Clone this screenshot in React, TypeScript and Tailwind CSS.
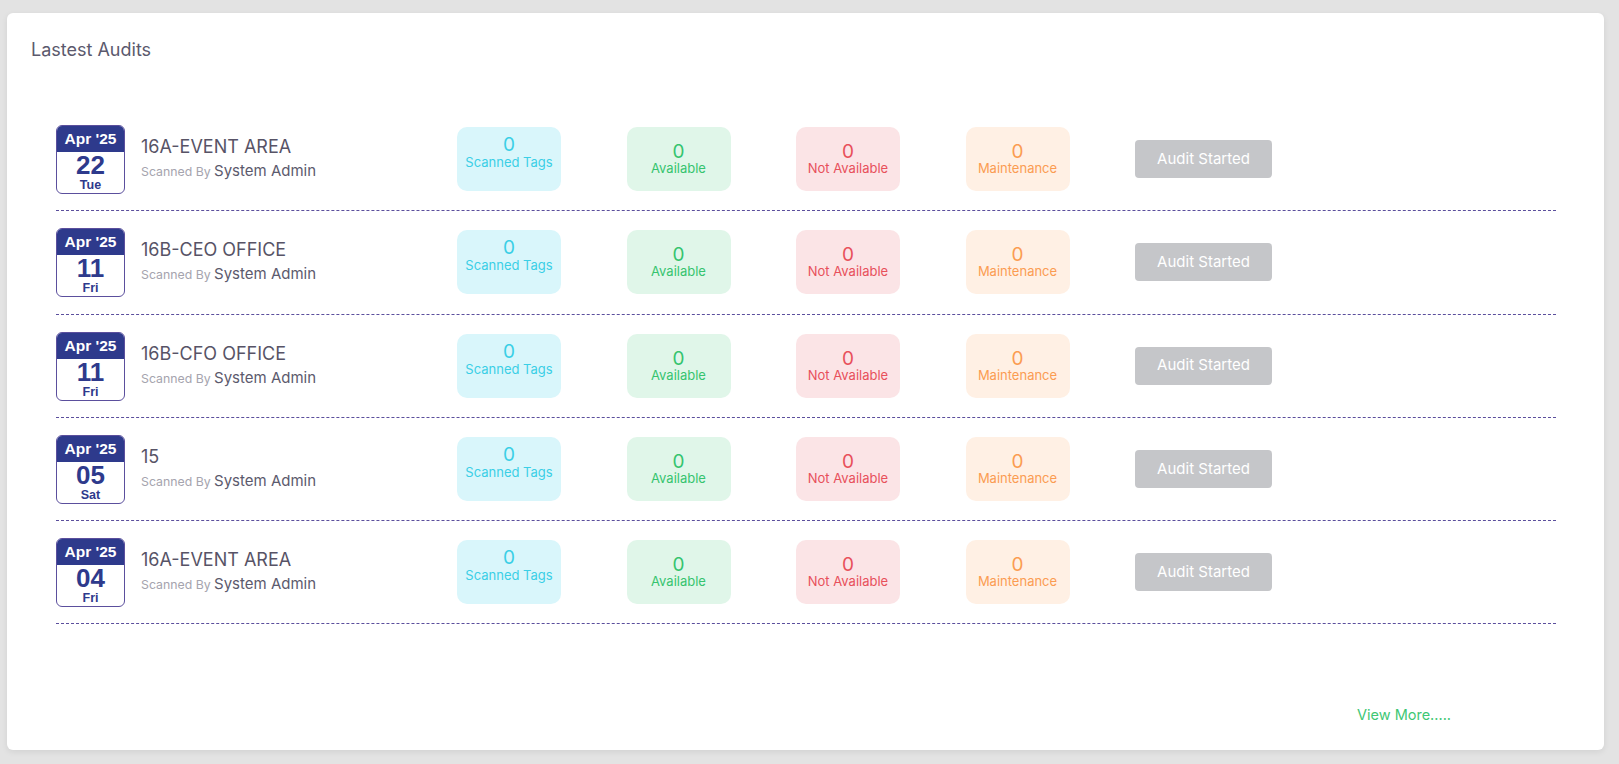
import React from "react";

type Row = { mon: string; day: string; dow: string; name: string };

const rows: Row[] = [
  { mon: "Apr '25", day: "22", dow: "Tue", name: "16A-EVENT AREA" },
  { mon: "Apr '25", day: "11", dow: "Fri", name: "16B-CEO OFFICE" },
  { mon: "Apr '25", day: "11", dow: "Fri", name: "16B-CFO OFFICE" },
  { mon: "Apr '25", day: "05", dow: "Sat", name: "15" },
  { mon: "Apr '25", day: "04", dow: "Fri", name: "16A-EVENT AREA" },
];

function DateBox({ r }: { r: Row }) {
  return (
    <div className="w-[69px] h-[69px] shrink-0 rounded-[6px] border border-[#5b4f9d] overflow-hidden flex flex-col bg-white [font-family:'Liberation_Sans',Arial,sans-serif]">
      <div className="h-[26px] bg-[#2e3a8c] text-white text-[15.5px] font-bold leading-[26px] text-center">
        {r.mon}
      </div>
      <div className="flex flex-col items-center text-[#2e3a8c] font-bold">
        <div className="text-[26px] leading-[26px]">{r.day}</div>
        <div className="text-[12.5px] leading-[14px]">{r.dow}</div>
      </div>
    </div>
  );
}

function Row({ r }: { r: Row }) {
  return (
    <div className="flex items-start pt-[17px] pb-[16.3px] border-b border-dashed border-[#5b4f9d]">
      <DateBox r={r} />
      <div className="w-[316px] ml-[16px] pt-[11px] flex flex-col shrink-0">
        <div className="text-[18px] leading-[22px] text-[#575366]">{r.name}</div>
        <div className="mt-[2px] leading-[20px] whitespace-nowrap">
          <span className="text-[12.3px] text-[#a5a4ae]">Scanned By </span>
          <span className="text-[15px] text-[#5c5a6d]">System Admin</span>
        </div>
      </div>
      <div className="flex items-start gap-[65.5px] pt-[2px]">
        <div className="w-[104px] h-[64px] rounded-[10px] bg-[#d9f6fb] text-[#3bcfe6] flex flex-col items-center pt-[7px]">
          <div className="text-[19px] leading-[22px]">0</div>
          <div className="text-[13px] leading-[16px] -mt-[2px]">Scanned Tags</div>
        </div>
        <div className="w-[104px] h-[64px] rounded-[10px] bg-[#e0f6e9] text-[#36c46f] flex flex-col items-center pt-[14px]">
          <div className="text-[19px] leading-[22px]">0</div>
          <div className="text-[13px] leading-[16px] -mt-[3px]">Available</div>
        </div>
        <div className="w-[104px] h-[64px] rounded-[10px] bg-[#fbe4e6] text-[#e8505b] flex flex-col items-center pt-[14px]">
          <div className="text-[19px] leading-[22px]">0</div>
          <div className="text-[13px] leading-[16px] -mt-[3px]">Not Available</div>
        </div>
        <div className="w-[104px] h-[64px] rounded-[10px] bg-[#fff0e4] text-[#fb9c52] flex flex-col items-center pt-[14px]">
          <div className="text-[19px] leading-[22px]">0</div>
          <div className="text-[13px] leading-[16px] -mt-[3px]">Maintenance</div>
        </div>
        <div className="mt-[13px] w-[137px] h-[38px] rounded-[4px] bg-[#c5c6c9] text-white text-[15px] flex items-center justify-center">
          Audit Started
        </div>
      </div>
    </div>
  );
}

export default function App() {
  return (
    <div className="min-h-[764px] bg-[#e3e3e3] pt-[13px] pl-[7px] pr-[15px] [font-family:Inter,'Noto_Sans',sans-serif]">
      <div className="w-[1597px] h-[737px] bg-white rounded-[6px] shadow-[0_2px_6px_rgba(0,0,0,0.08)] flex flex-col">
        <div className="pl-[24px] pt-[26px] text-[18px] leading-[22px] text-[#5b596d]">Lastest Audits</div>
        <div className="ml-[49px] w-[1500px] mt-[47px]">
          {rows.map((r, i) => (
            <Row key={i} r={r} />
          ))}
        </div>
        <div className="flex justify-end pr-[153px] mt-[81px]">
          <span className="text-[14.5px] leading-[20px] text-[#3ec774]">View More.....</span>
        </div>
      </div>
    </div>
  );
}
